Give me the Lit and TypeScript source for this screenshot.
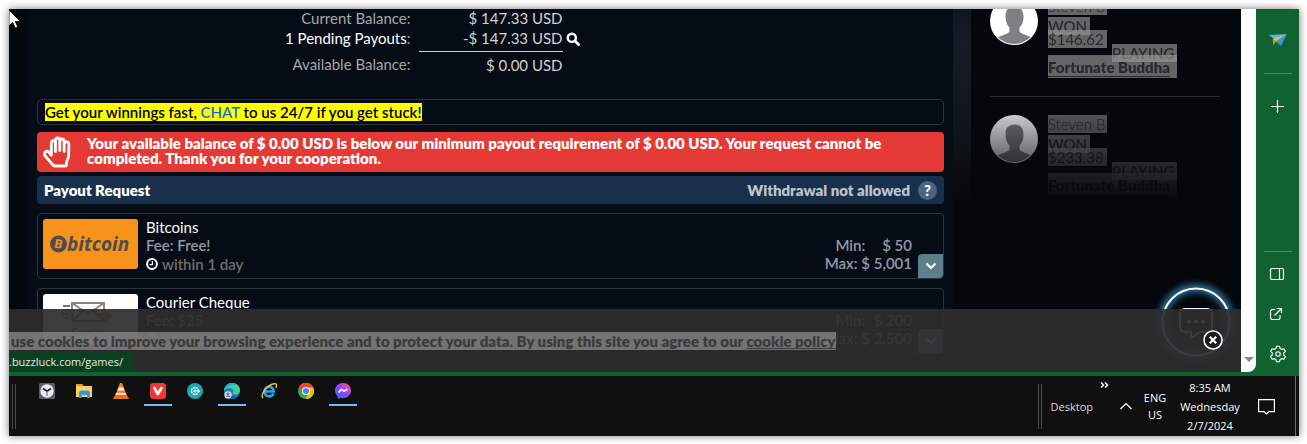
import { LitElement, html, svg, css } from "lit";
import { customElement, property } from "lit/decorators.js";

const icons = {
  search: svg`<circle cx="5.8" cy="5.8" r="4.1" fill="none" stroke="#fff" stroke-width="2.4"/><path d="M9 9l3.6 3.6" stroke="#fff" stroke-width="2.8" stroke-linecap="round"/>`,
  hand: svg`<path d="M8.500 16.500V6.500a2 2 0 0 1 4 0V15M12.500 14V4a2 2 0 0 1 4.200 0v10M16.700 14V5a2 2 0 0 1 4.200 0v10M20.900 15V8a2 2 0 0 1 4.600 0l-.3 12-2 5.500V27.500q0 1.500-1.500 1.500H12.500q-2 0-3-1.500L2.300 19C.8 16 4 13.500 6 15.500L8.500 18.500V9" fill="none" stroke="#fff" stroke-width="2.800" stroke-linejoin="round" stroke-linecap="round"/>`,
  clock: svg`<circle cx="6" cy="6" r="4.900" fill="none" stroke="#fff" stroke-width="2"/><path d="M6.400 3v3.600H3.600" fill="none" stroke="#fff" stroke-width="1.300"/>`,
  chevron: svg`<path d="M1.500 1.500L6 6l4.500-4.500" fill="none" stroke="currentColor" stroke-width="2"/>`,
};

@customElement("payout-card")
class PayoutCard extends LitElement {
  @property() name = "";
  @property() fee = "";
  @property() min = "";
  @property() max = "";
  @property() logo = "";

  static styles = css`
    :host { display: block; box-sizing: border-box; height: 66px; margin-bottom: 9px; position: relative; border: 1px solid #2c333d; border-radius: 4px; padding: 5px; font-size: 15px; line-height: 18px; color: #939aa6; font-weight: 600; }
    .row { display: flex; gap: 8px; }
    .logo { width: 95px; height: 50px; border-radius: 3px; flex: none; display: block; }
    .info { flex: 1; margin-top: -1px; }
    .name { color: #fff; font-weight: 400; }
    .time { color: #6e6e6e; display: flex; align-items: center; gap: 4px; line-height: 20px; }
    .limits { margin: 17px 26px 0 0; text-align: right; }
    .amount { display: inline-block; min-width: 43px; }
    .open { position: absolute; right: 0; bottom: 0; width: 25px; height: 24px; padding: 0; border: 0; border-radius: 4px 0 4px 0; background: #607d8b; color: #fff; display: grid; place-items: center; }
  `;

  drawLogo() {
    if (this.logo === "bitcoin") {
      return html`<svg class="logo" viewBox="0 0 95 50" role="img" aria-label="bitcoin">
        <rect width="95" height="50" fill="#f7931a"/>
        <circle cx="15.500" cy="25" r="8.500" fill="#4d4d4d"/>
        <text x="11.500" y="29" font-family="Lato" font-size="12" font-weight="900" fill="#f7931a" transform="rotate(12 15 25)">B</text>
        <text x="24" y="32" font-family="Open Sans" font-size="19" font-weight="700" font-style="italic" fill="#4d4d4d">bitcoin</text>
      </svg>`;
    }
    return html`<svg class="logo" viewBox="0 0 95 50" role="img" aria-label="Courier">
      <rect width="95" height="50" fill="#fff"/>
      <path d="M29 9h32v18H29zM29 9l16 11L61 9M29 27l11-10M61 27L50 17" fill="none" stroke="#858585" stroke-width="2"/>
      <path d="M20 12h7M22 16h5M19 20h8M22 24h5" stroke="#3d3f87" stroke-width="1.500"/>
      <path d="M54 19h8v-4l8 7-8 6v-4h-8z" fill="#f0892a"/>
      <text x="29" y="41" font-family="Lato" font-size="10" fill="#444">Courier</text>
    </svg>`;
  }

  render() {
    return html`<div class="row">
        ${this.drawLogo()}
        <div class="info">
          <div class="name">${this.name}</div>
          <div>Fee: ${this.fee}</div>
          <div class="time"><svg width="12" height="12" viewBox="0 0 12 12">${icons.clock}</svg>within 1 day</div>
        </div>
        <div class="limits">
          <div>Min: <span class="amount">${this.min}</span></div>
          <div>Max: <span class="amount">${this.max}</span></div>
        </div>
      </div>
      <button class="open" aria-label="Show ${this.name} details"><svg width="12" height="8" viewBox="0 0 12 8">${icons.chevron}</svg></button>`;
  }
}

@customElement("win-item")
class WinItem extends LitElement {
  @property() player = "";
  @property() amount = "";
  @property() game = "";

  static styles = css`
    :host { display: flex; gap: 10px; height: 81px; padding-bottom: 18px; margin-bottom: 18px; border-bottom: 1px solid #2b2c2e; font-size: 15px; line-height: 18px; color: rgba(20, 20, 20, 0.72); }
    .avatar { width: 48px; height: 48px; flex: none; }
    .lines { width: 129px; display: flex; flex-direction: column; align-items: flex-start; }
    .mark { background: rgba(150, 150, 150, 0.66); white-space: nowrap; }
    .who { width: 59px; font-weight: 300; }
    .won { margin-top: 2px; width: 42px; font-weight: 600; }
    .sum { margin-top: -5px; width: 59px; }
    .playing { margin-top: -4px; align-self: flex-end; width: 65px; font-weight: 600; }
    .game { margin-top: -7px; box-sizing: border-box; width: 100%; padding: 3px 0 2px; font-weight: 800; color: inherit; text-decoration: underline; text-underline-offset: 3px; text-decoration-skip-ink: none; }
  `;

  render() {
    return html`<svg class="avatar" viewBox="0 0 48 48">
        <defs><clipPath id="c"><circle cx="24" cy="24" r="23"/></clipPath></defs>
        <circle cx="24" cy="24" r="24" fill="#fff"/>
        <g clip-path="url(#c)" fill="#7e8082"><path d="M24.500 9.500c-6 0-9.300 4-9 10 .2 6 2 9 4 11v3.500c0 2-4 3-12 6.500V48h34v-7.500c-8-3.500-12-4.500-12-6.500v-3.500c2-2 4-5 4-11 0-6-3-10-9-10z"/></g>
      </svg>
      <div class="lines">
        <span class="mark who">${this.player}</span>
        <span class="mark won">WON</span>
        <span class="mark sum">${this.amount}</span>
        <span class="mark playing">PLAYING</span>
        <a class="mark game" href="#game">${this.game}</a>
      </div>`;
  }
}

@customElement("task-bar")
class TaskBar extends LitElement {
  static styles = css`
    :host { display: flex; height: 60px; background: #101010; color: #fff; font: 11px/17px "Open Sans", sans-serif; box-sizing: border-box; }
    button { border: 0; padding: 0; background: none; color: inherit; font: inherit; }
    .grip { width: 2px; height: 45px; margin: 8px 0 0 3px; border: solid #4a4a4a; border-width: 0 1px; flex: none; }
    .apps { display: flex; gap: 9px; margin: 6px 0 0 17px; flex: 1; }
    .app { width: 28px; height: 24px; display: flex; justify-content: center; }
    .running { border-bottom: 2px solid #76b9ed; }
    .tray { display: flex; align-items: center; flex: none; }
    .tray .grip { margin: 0; }
    .desktop { margin-left: 9px; color: #d8d8d8; }
    .more { align-self: flex-start; margin: 5px 0 0 7px; display: flex; }
    .up { margin-left: 11px; display: flex; }
    .lang { margin-left: 10px; width: 26px; text-align: center; }
    .time { margin-left: 7px; width: 70px; line-height: 19px; text-align: center; white-space: nowrap; }
    .note { margin: 0 20px 0 13px; display: flex; }
    .peek { width: 3px; height: 60px; border-left: 1px solid #6a6a6a; }
  `;

  render() {
    const apps = [
      { name: "Clock", on: false, art: svg`<rect width="16" height="16" rx="1.500" fill="#56606c"/><circle cx="8" cy="8" r="6.700" fill="#eceff1"/><path d="M4 5.500L8 8.200l4-2.700" fill="none" stroke="#222" stroke-width="1.700"/><path d="M8 8V13" stroke="#d44" stroke-width="1.200"/>` },
      { name: "File Explorer", on: false, art: svg`<path d="M0 1h6l1.500 2H16v11H0z" fill="#ffd166"/><path d="M0 1h6l1.500 2H0z" fill="#e6a000"/><path d="M3 9l1.500-1.500h8L14 9v6h-3v-3H6v3H3z" fill="#3a96dd"/>` },
      { name: "VLC", on: false, art: svg`<path d="M7 0h2l5 13H2z" fill="#f58220"/><path d="M5.700 4.500h4.600l1.200 3H4.500z" fill="#eee"/><path d="M3.200 10h9.600l.7 1.800H2.500z" fill="#eee"/><path d="M2 12h12l2 4H0z" fill="#e8720c"/>` },
      { name: "Vivaldi", on: true, art: svg`<rect width="16" height="16" rx="3.500" fill="#ef3939"/><path d="M4.500 5l3.300 6 3.700-6" fill="none" stroke="#fff" stroke-width="2.600" stroke-linecap="round" stroke-linejoin="round"/>` },
      { name: "Settings", on: false, art: svg`<circle cx="8" cy="8" r="8" fill="#1ba6b2"/><circle cx="8" cy="8" r="3.500" fill="none" stroke="#fff" stroke-width="1.500" stroke-dasharray="2 .8"/><path d="M7 8h6M8.500 6.500l-2 1.500 2 1.500" fill="none" stroke="#fff"/>` },
      { name: "Edge", on: true, art: svg`<circle cx="8" cy="8" r="8" fill="#1b7fd0"/><path d="M0 7.500C.5 3 4 0 8 0c5 0 8 3.500 8 7 0 3-2.500 4.500-5 4.500-2 0-3-1-2-2 1.300-2-.4-4.500-3.500-4.500-2.500 0-4.500 1-5.500 2.500z" fill="#45d18b"/><path d="M0 7.500C.5 3 4 0 8 0c2 0 4 1 5 2-6-1-10 1-13 5.500z" fill="#22a9de"/><path d="M6 8c-.5 4 3 7 8 4.500C11 17 4 17 4 11z" fill="#1558a8"/><circle cx="4" cy="12" r="3.700" fill="#d5dbe0"/><circle cx="4" cy="11" r="1.400" fill="#68737d"/><path d="M1.600 14c1-2 4-2 5 0z" fill="#68737d"/>` },
      { name: "Internet Explorer", on: false, art: svg`<path d="M12.500 10.500c-2 4.500-9 3.500-9-2s8.500-6.500 9.200 0H4" fill="none" stroke="#29a3ea" stroke-width="2.700"/><path d="M2 15C-1 12 5 3 12 1c4-1.200 4 1 3 4" fill="none" stroke="#f7c531" stroke-width="1.400"/>` },
      { name: "Chrome", on: false, art: svg`<circle cx="8" cy="8" r="8" fill="#34a853"/><path d="M1 4a8 8 0 0 1 14 0l-.1.500H8l-3.500 5z" fill="#ea4335"/><path d="M15.200 4.500A8 8 0 0 1 7.500 16L11 9.500l-1.500-5z" fill="#fbbc05"/><circle cx="8" cy="8" r="4" fill="#fff"/><circle cx="8" cy="8" r="3" fill="#4285f4"/>` },
      { name: "Messenger", on: true, art: svg`<defs><linearGradient id="m" x1="0" y1="1" x2="1" y2="0"><stop offset="0" stop-color="#0a7cff"/><stop offset=".55" stop-color="#a33bff"/><stop offset="1" stop-color="#ff6a68"/></linearGradient></defs><path d="M8 0C3.500 0 0 3.300 0 7.600c0 2.300 1 4.300 2.500 5.600L3 16l2.200-1.200c5 1.800 10.800-1.500 10.800-7.200C16 3.300 12.500 0 8 0z" fill="url(#m)"/><path d="M3.500 9.500l3-3.200 2.600 2 3.300-2" fill="none" stroke="#fff" stroke-width="1.700"/>` },
    ];
    return html`<div class="grip"></div>
      <div class="apps">${apps.map((a) => html`<button class="app ${a.on ? "running" : ""}" aria-label=${a.name}><svg width="16" height="18" viewBox="0 -1 16 18">${a.art}</svg></button>`)}</div>
      <div class="tray">
        <div class="grip"></div>
        <button class="desktop">Desktop</button>
        <button class="more" aria-label="More"><svg width="9" height="9" viewBox="0 0 9 9"><path d="M1 1.500L3.500 4 1 6.500M5 1.500L7.500 4 5 6.500" fill="none" stroke="#fff" stroke-width="1.500"/></svg></button>
        <button class="up" aria-label="Hidden icons"><svg width="12" height="8" viewBox="0 0 12 8"><path d="M.5 7L6 1.500 11.500 7" fill="none" stroke="#fff" stroke-width="1.200"/></svg></button>
        <div class="lang">ENG<br>US</div>
        <div class="time">8:35 AM<br>Wednesday<br>2/7/2024</div>
        <button class="note" aria-label="Notifications"><svg width="17" height="17" viewBox="0 0 17 17"><path d="M.6 1.600h15.800v12H11L8.500 16 6 13.600H.6z" fill="none" stroke="#fff" stroke-width="1.200"/></svg></button>
        <div class="peek"></div>
      </div>`;
  }
}

@customElement("app-root")
class AppRoot extends LitElement {
  static styles = css`
    :host { display: block; box-sizing: border-box; height: 100vh; padding: 9px 8px 8px 9px; background: #fff; overflow: hidden; font-family: Lato, sans-serif; font-size: 15px; line-height: 18px; }
    button { border: 0; padding: 0; background: none; color: inherit; font: inherit; }
    .desktop { position: relative; height: 100%; display: flex; flex-direction: column; box-shadow: 0 0 8px rgba(0, 0, 0, 0.55); }
    .browser { flex: 1; min-height: 0; display: flex; background: #106330; }
    .view { flex: 1; display: flex; min-width: 0; margin-bottom: 4px; border-radius: 0 0 8px 0; overflow: hidden; background: #fcfcfc; }
    .page { flex: 1; min-width: 0; position: relative; display: flex; background: #04070b; overflow: hidden; }
    .main { flex: 1; min-width: 0; margin-left: 19px; padding: 0 9px; background: #060c16; }
    .balance { display: grid; grid-template-columns: 1fr 144px 1fr; column-gap: 8px; grid-auto-rows: 20px; line-height: 18px; color: #a6a6a6; text-align: right; }
    .value { color: #d2d2d2; }
    .pending { color: #fff; }
    .find { grid-column: 3; justify-self: start; margin-left: -5px; display: flex; align-items: center; }
    .total { margin-top: 2px; grid-auto-rows: 28px; line-height: 26px; }
    .total .value { border-top: 1px solid #cfcfcf; }
    .notice { box-sizing: border-box; margin-top: 20px; border: 1px solid #2c333d; border-radius: 5px; padding: 3px 7px; height: 26px; color: #000; font-weight: 600; }
    .notice mark { background: #ff0; display: inline-block; color: #000; }
    .notice a { color: #1a6fc4; text-decoration: none; }
    .alert { box-sizing: border-box; margin-top: 7px; height: 40px; border-radius: 4px; background: #e53935; color: #fff; display: flex; gap: 15px; padding: 4px 5px; line-height: 15px; font-weight: 800; }
    .alert svg { flex: none; }
    .alert p { margin: 0; }
    .heading { margin: 4px 0 9px; padding: 0 7px; height: 28px; border-radius: 4px; background: #18304b; display: flex; align-items: center; gap: 8px; color: #bcc3cb; font-weight: 800; }
    .heading h2 { margin: 0; flex: 1; color: #fff; font: inherit; }
    .help { width: 19px; height: 19px; border-radius: 50%; background: #4d6480; color: #fff; font-weight: 900; line-height: 19px; }
    .next { height: 66px; box-sizing: border-box; border: 1px solid #2c333d; border-radius: 4px; }
    .texture { width: 18px; background: linear-gradient(#10161f, #151c25 35px, #10151c 120px, #04070b 200px); }
    .feed { width: 230px; height: 200px; padding: 0 21px 0 19px; overflow: hidden; -webkit-mask-image: linear-gradient(#000 95px, rgba(0, 0, 0, 0.75) 110px, rgba(0, 0, 0, 0.2) 170px, transparent 195px); mask-image: linear-gradient(#000 95px, rgba(0, 0, 0, 0.75) 110px, rgba(0, 0, 0, 0.2) 170px, transparent 195px); }
    .stack { margin-top: -12px; }
    .chat { position: absolute; right: 1px; bottom: 6px; display: block; }
    .cookies { position: absolute; left: 0; right: 0; bottom: 0; height: 63px; box-sizing: border-box; padding-top: 23px; background: rgba(45, 45, 45, 0.93); color: #3b3b3b; font-weight: 800; white-space: nowrap; }
    .cookies mark { display: inline-block; padding-left: 2px; background: rgba(140, 140, 140, 0.75); color: inherit; }
    .cookies a { color: inherit; text-decoration-skip-ink: none; }
    .close { position: absolute; right: 18px; bottom: 22px; display: flex; }
    .status { position: absolute; left: 0; bottom: 0; height: 21px; width: 124px; box-sizing: border-box; background: #0b3f20; border-radius: 0 4px 0 0; color: #e4eae6; font: 11px/21px "Open Sans", sans-serif; }
    .scroll { width: 15px; display: flex; align-items: flex-end; justify-content: center; padding-bottom: 10px; box-sizing: border-box; }
    .side { width: 43px; display: flex; flex-direction: column; align-items: center; }
    .rule { width: 28px; height: 1px; background: #438a5c; flex: none; }
    .side button { height: 40px; display: grid; place-items: center; }
    .side .first { height: 64px; }
    .side .add { height: 64px; }
    .gap { flex: 1; }
    .tools { padding: 2px 0; }
    .cursor { position: absolute; left: 0; top: 1px; }
  `;

  render() {
    return html`<div class="desktop">
      <div class="browser">
        <div class="view">
          <div class="page">
            <main class="main">
              <div class="balance">
                <span>Current Balance:</span><span class="value">$ 147.33 USD</span><span></span>
                <span><span class="pending">1 Pending Payouts</span>:</span><span class="value">-$ 147.33 USD</span>
                <button class="find" aria-label="View pending payouts"><svg width="14" height="14" viewBox="0 0 14 14">${icons.search}</svg></button>
              </div>
              <div class="balance total">
                <span>Available Balance:</span><span class="value">$ 0.00 USD</span>
              </div>
              <div class="notice"><mark>Get your winnings fast, <a href="#chat">CHAT</a> to us 24/7 if you get stuck!</mark></div>
              <div class="alert" role="alert"><svg width="30" height="32" viewBox="0 0 28 31">${icons.hand}</svg>
                <p>Your available balance of $ 0.00 USD is below our minimum payout requirement of $ 0.00 USD. Your request cannot be completed. Thank you for your cooperation.</p></div>
              <div class="heading"><h2>Payout Request</h2><span>Withdrawal not allowed</span><button class="help" aria-label="Help">?</button></div>
              <payout-card name="Bitcoins" fee="Free!" min="$ 50" max="$ 5,001" logo="bitcoin"></payout-card>
              <payout-card name="Courier Cheque" fee="$25" min="$ 200" max="$ 2,500" logo="courier"></payout-card>
              <div class="next"></div>
            </main>
            <div class="texture"></div>
            <aside class="feed"><div class="stack">
              <win-item player="Steven B" amount="$146.62" game="Fortunate Buddha"></win-item>
              <win-item player="Steven B" amount="$233.38" game="Fortunate Buddha"></win-item>
            </div></aside>
            <svg class="chat" width="88" height="88" viewBox="0 0 88 88">
              <defs><filter id="g" x="-20%" y="-20%" width="140%" height="140%"><feGaussianBlur stdDeviation="3.500"/></filter></defs>
              <circle cx="44" cy="44" r="34" fill="none" stroke="#3f8fc8" stroke-width="6" filter="url(#g)"/>
              <circle cx="44" cy="44" r="33.500" fill="none" stroke="#fff" stroke-width="2"/>
              <path d="M33 31h22a5 5 0 0 1 5 5v13a5 5 0 0 1-5 5h-7l-9 6v-6h-6a5 5 0 0 1-5-5V36a5 5 0 0 1 5-5z" fill="none" stroke="#fff" stroke-width="2"/>
              <circle cx="37" cy="43.500" r="2" fill="#fff"/><circle cx="44" cy="43.500" r="2" fill="#fff"/><circle cx="51" cy="43.500" r="2" fill="#fff"/>
            </svg>
            <div class="cookies"><mark>use cookies to improve your browsing experience and to protect your data. By using this site you agree to our <a href="#cookies">cookie policy</a></mark>
              <button class="close" aria-label="Close"><svg width="20" height="20" viewBox="0 0 20 20"><circle cx="10" cy="10" r="9" fill="#1d1d1d" stroke="#fff" stroke-width="1.600"/><path d="M6.800 6.800l6.400 6.400M13.200 6.800l-6.400 6.400" stroke="#fff" stroke-width="2.200"/></svg></button>
            </div>
            <div class="status">.buzzluck.com/games/</div>
          </div>
          <div class="scroll"><svg width="10" height="5" viewBox="0 0 10 5"><path d="M0 0h10L5 5z" fill="#8b8b8b"/></svg></div>
        </div>
        <nav class="side">
          <button class="first" aria-label="Send"><svg width="18" height="14" viewBox="0 0 18 14"><path d="M0 1l18-1L5 5z" fill="#40c4e8"/><path d="M18 0l-6 12-6-5z" fill="#3d8ff0"/><path d="M18 0L4 5v6l3-4z" fill="#ffc01e"/><path d="M4 5v6l3-4z" fill="#e68a00"/></svg></button>
          <div class="rule"></div>
          <button class="add" aria-label="Add panel"><svg width="13" height="13" viewBox="0 0 13 13"><path d="M6.500 0v13M0 6.500h13" stroke="#fff" stroke-width="1.200"/></svg></button>
          <div class="gap"></div>
          <div class="rule"></div>
          <div class="tools">
            <button aria-label="Toggle panel"><svg width="16" height="14" viewBox="0 0 16 14"><rect x="1.500" y="1.500" width="13" height="11" rx="1.500" fill="none" stroke="#fff" stroke-width="1.200"/><path d="M10.500 1.500v11" stroke="#fff" stroke-width="1.200"/></svg></button>
            <button aria-label="Open in new window"><svg width="14" height="14" viewBox="0 0 14 14"><path d="M6 2.500H3.500a2 2 0 0 0-2 2v6a2 2 0 0 0 2 2H9a2 2 0 0 0 2-2V8M7.500 1.500H12.500V6M12.500 1.500L5.500 8.500" fill="none" stroke="#fff" stroke-width="1.200"/></svg></button>
            <button aria-label="Settings"><svg width="18" height="18" viewBox="0 0 18 18"><path d="M7.500 1.200h3l.6 2.300 1.500.9 2.300-.7 1.500 2.600L14.700 8v2l1.700 1.700-1.500 2.600-2.300-.7-1.500.9-.6 2.300h-3l-.6-2.300-1.500-.9-2.300.7-1.500-2.600L3.300 10V8L1.600 6.300l1.500-2.600 2.300.7 1.500-.9z" fill="none" stroke="#fff" stroke-width="1.100" stroke-linejoin="round"/><circle cx="9" cy="9" r="2.200" fill="none" stroke="#fff" stroke-width="1.100"/></svg></button>
          </div>
        </nav>
      </div>
      <task-bar></task-bar>
      <svg class="cursor" width="12" height="19" viewBox="0 0 12 19"><path d="M0 0v16l3.700-3.500L6.300 18l2.400-1.100L6.300 11.500H11.500z" fill="#fff" stroke="#000" stroke-width=".8"/></svg>
    </div>`;
  }
}
